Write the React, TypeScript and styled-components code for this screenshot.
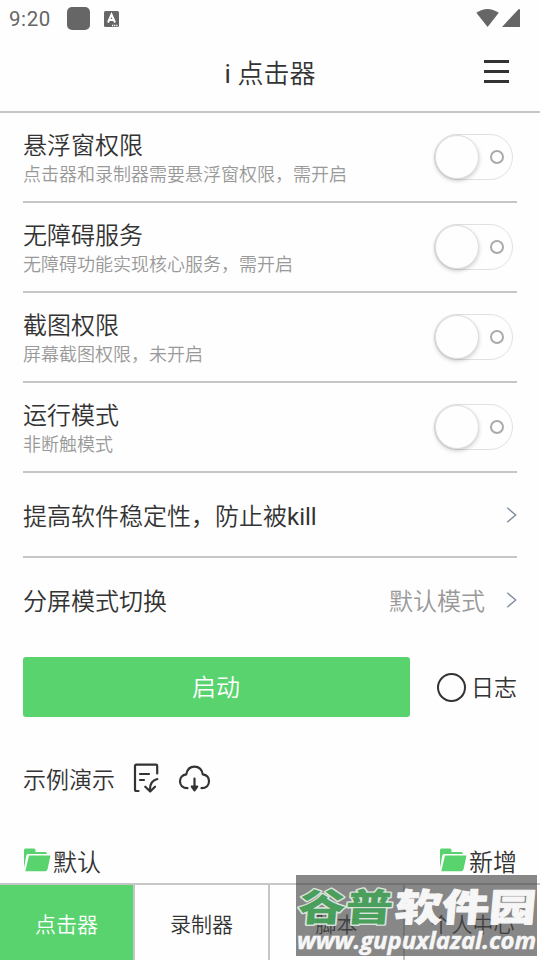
import React from "react";
import styled, { createGlobalStyle } from "styled-components";

const GREEN = "#58d36e";
const INK = "#333333";
const LINE = "#c6c6c6";

const GlobalStyle = createGlobalStyle`
  * { box-sizing: border-box; }
  body {
    margin: 0;
    background: #fefefe;
    color: ${INK};
    font-family: Roboto, "Noto Sans CJK SC DemiLight", "Noto Sans CJK SC", sans-serif;
    font-weight: 400;
  }
  svg { display: block; flex: none; }
`;

const Screen = styled.div`
  position: relative;
  width: 540px;
  height: 960px;
  display: flex;
  flex-direction: column;
  overflow: hidden;
`;

const StatusBar = styled.div`
  height: 37px;
  padding: 0 20px 0 9px;
  display: flex;
  align-items: center;
  color: #666;
`;

const Clock = styled.span`
  width: 58px;
  padding-top: 1px;
  font-size: 20.5px;
  font-weight: 400;
  letter-spacing: 0.6px;
  line-height: 37px;
`;

const AppBadge = styled.span`
  width: 23px;
  height: 23px;
  margin-right: 14px;
  border-radius: 5px;
  background: #666;
`;

const Signals = styled.div`
  margin: -1px 0 0 auto;
`;

const Header = styled.header`
  height: 76px;
  border-bottom: 2px solid ${LINE};
  display: grid;
  grid-template-columns: 1fr auto 1fr;
  align-items: center;
`;

const Title = styled.h1`
  grid-column: 2;
  margin: 0;
  font-size: 26px;
  font-weight: 400;
  line-height: 36px;
`;

const MenuButton = styled.div`
  justify-self: end;
  width: 25px;
  height: 23px;
  margin: 0 31px 6px 0;
  display: flex;
  flex-direction: column;
  justify-content: space-between;
`;

const MenuBar = styled.span`
  height: 3px;
  background: ${INK};
`;

const Settings = styled.main`
  padding: 0 23px;
`;

const Row = styled.div<{ $height: number; $last?: boolean }>`
  height: ${(p) => p.$height}px;
  border-bottom: 2px solid ${(p) => (p.$last ? "transparent" : LINE)};
  display: flex;
  align-items: center;
`;

const RowText = styled.div<{ $single?: boolean }>`
  flex: 1;
  padding-top: ${(p) => (p.$single ? 4 : 4)}px;
`;

const Label = styled.div`
  font-size: 24px;
  line-height: 32px;
`;

const Hint = styled.div`
  font-size: 18px;
  line-height: 26px;
  color: #999;
`;

const Value = styled.span`
  margin-right: 21px;
  padding-top: 4px;
  font-size: 24px;
  line-height: 32px;
  color: #999;
`;

const Switch = styled.div`
  width: 79px;
  height: 46px;
  margin-right: 4px;
  padding-right: 8px;
  border: 1.5px solid #e1e1e1;
  border-radius: 23px;
  display: flex;
  align-items: center;
  justify-content: space-between;
`;

const Knob = styled.span`
  width: 44px;
  height: 44px;
  border-radius: 50%;
  background: #fefefe;
  border: 1px solid #dedede;
  box-shadow: 0 2px 4px rgba(0, 0, 0, 0.2);
`;

const OffMark = styled.span`
  width: 14px;
  height: 14px;
  border-radius: 50%;
  border: 2px solid #aaa;
`;

const StartRow = styled.div`
  height: 60px;
  margin-top: 14px;
  display: flex;
  align-items: center;
`;

const StartButton = styled.div`
  width: 387px;
  height: 60px;
  padding: 1px 1px 0 0;
  border-radius: 3px;
  background: ${GREEN};
  color: #fff;
  font-size: 24px;
  line-height: 60px;
  text-align: center;
`;

const LogOption = styled.div`
  margin-left: auto;
  display: flex;
  align-items: center;
  gap: 5px;
  font-size: 23px;
`;

const LogLabel = styled.span`
  padding-top: 4px;
  line-height: 34px;
`;

const Radio = styled.span`
  width: 29px;
  height: 29px;
  border: 2.5px solid ${INK};
  border-radius: 50%;
`;

const DemoRow = styled.div`
  height: 40px;
  margin-top: 44px;
  display: flex;
  align-items: center;
  font-size: 23px;
  line-height: 40px;
`;

const DemoIcons = styled.div`
  margin: -6px 0 0 18px;
  display: flex;
  gap: 19px;
`;

const FolderRow = styled.div`
  height: 40px;
  margin-top: 42px;
  display: flex;
  justify-content: space-between;
`;

const Folder = styled.div`
  display: flex;
  align-items: center;
  gap: 2px;
  font-size: 24px;
  line-height: 40px;
  svg { margin-bottom: 7px; }
`;

const TabBar = styled.nav`
  height: 77px;
  margin-top: auto;
  border-top: 2px solid ${LINE};
  display: grid;
  grid-template-columns: 135px 135px 135px 135px;
`;

const Tab = styled.div<{ $active?: boolean }>`
  border-right: 2px solid ${LINE};
  background: ${(p) => (p.$active ? GREEN : "transparent")};
  color: ${(p) => (p.$active ? "#fff" : INK)};
  font-size: 21px;
  line-height: 80px;
  text-align: center;
  &:last-child { border-right: none; }
`;

const Watermark = styled.div`
  position: absolute;
  left: 296px;
  top: 875px;
  width: 241px;
  height: 81px;
  background: rgba(70, 70, 70, 0.65);
`;

const WatermarkArt = styled.svg`
  width: 241px;
  height: 81px;
  overflow: visible;
  opacity: 0.93;
  font-family: "Noto Sans CJK SC", sans-serif;
  font-weight: 900;
`;

const Chevron = () => (
  <svg width="11" height="16" viewBox="0 0 11 16" fill="none" stroke="#818e9f" strokeWidth="1.4">
    <path d="M1.2 .8 9.7 8 1.2 15.2" />
  </svg>
);

const FolderIcon = () => (
  <svg width="28" height="24" viewBox="0 0 28 24" fill={GREEN}>
    <path d="M1 20V2Q1 .5 2.5 .5H11Q12.5 .5 12.5 2V4H22Q24 4 24 6H5Q3.7 6 3.3 7.5Z" />
    <path d="M6 7.5H27.5L24.6 21Q24.1 23.3 22 23.3H2.3Z" />
  </svg>
);

const ScriptIcon = () => (
  <svg width="26" height="30" viewBox="0 0 26 30" fill="none" stroke={INK} strokeWidth="2.2" strokeLinecap="round" strokeLinejoin="round">
    <path d="M5.5 28H3.5Q2 28 2 26.5V3Q2 1.7 3.3 1.7H23Q24.2 1.7 24.2 3V10.5M7 11H16M7 17H11M24.3 16Q16.3 18 17 28M12.3 23.7 17.2 28.5 22 23.7" />
  </svg>
);

const CloudIcon = () => (
  <svg width="33" height="30" viewBox="0 0 33 30" fill="none" stroke={INK} strokeWidth="2.2" strokeLinecap="round" strokeLinejoin="round">
    <path d="M9.5 25.2C4.5 25.2 2 22 2 18.3C2 14.5 4.7 11.8 8.3 11.3C9.2 6.6 12.2 3.7 16.5 3.7C20.8 3.7 23.9 6.6 24.7 11.3C28.5 11.8 31 14.5 31 18.3C31 22 28.5 25.2 23.5 25.2M16.5 15.5V25" />
    <path d="M13.8 23.5H19.2L16.5 27.3Z" fill={INK} />
  </svg>
);

const TranslateBadge = () => (
  <svg width="15" height="16" viewBox="0 0 15 16">
    <rect width="15" height="16" rx="1.5" fill="#666" />
    <path d="M4 11.5 7.5 3.5 11 11.5M5.5 9H9.5" fill="none" stroke="#fff" strokeWidth="2" />
    <path d="M8 14.5H13.5" stroke="#fff" strokeWidth="1.3" strokeDasharray="1.3 .8" />
  </svg>
);

const PERMISSIONS = [
  { label: "悬浮窗权限", hint: "点击器和录制器需要悬浮窗权限，需开启" },
  { label: "无障碍服务", hint: "无障碍功能实现核心服务，需开启" },
  { label: "截图权限", hint: "屏幕截图权限，未开启" },
  { label: "运行模式", hint: "非断触模式" },
];

export default function App() {
  return (
    <Screen>
      <GlobalStyle />
      <StatusBar>
        <Clock>9:20</Clock>
        <AppBadge />
        <TranslateBadge />
        <Signals>
          <svg width="46" height="20" viewBox="0 0 46 20" fill="#666">
            <path d="M2.3 4.8Q13.5-2.8 24.8 4.8L13.6 19Z" />
            <path d="M28 19 44.5 1.2Q46 .5 46 2V19Z" />
          </svg>
        </Signals>
      </StatusBar>
      <Header>
        <Title>i 点击器</Title>
        <MenuButton>
          <MenuBar />
          <MenuBar />
          <MenuBar />
        </MenuButton>
      </Header>
      <Settings>
        {PERMISSIONS.map((item) => (
          <Row key={item.label} $height={90}>
            <RowText>
              <Label>{item.label}</Label>
              <Hint>{item.hint}</Hint>
            </RowText>
            <Switch>
              <Knob />
              <OffMark />
            </Switch>
          </Row>
        ))}
        <Row $height={85}>
          <RowText $single>
            <Label>提高软件稳定性，防止被kill</Label>
          </RowText>
          <Chevron />
        </Row>
        <Row $height={85} $last>
          <RowText $single>
            <Label>分屏模式切换</Label>
          </RowText>
          <Value>默认模式</Value>
          <Chevron />
        </Row>
        <StartRow>
          <StartButton>启动</StartButton>
          <LogOption>
            <Radio />
            <LogLabel>日志</LogLabel>
          </LogOption>
        </StartRow>
        <DemoRow>
          示例演示
          <DemoIcons>
            <ScriptIcon />
            <CloudIcon />
          </DemoIcons>
        </DemoRow>
        <FolderRow>
          <Folder>
            <FolderIcon />
            默认
          </Folder>
          <Folder>
            <FolderIcon />
            新增
          </Folder>
        </FolderRow>
      </Settings>
      <TabBar>
        <Tab $active>点击器</Tab>
        <Tab>录制器</Tab>
        <Tab>脚本</Tab>
        <Tab>个人中心</Tab>
      </TabBar>
      <Watermark>
        <WatermarkArt viewBox="0 0 241 81">
          <g transform="translate(1 46) skewX(-5) scale(1 .92)" fontSize="41" paintOrder="stroke" strokeLinejoin="round">
            <text textLength="95" lengthAdjust="spacingAndGlyphs" fill="#45a158" stroke="#e4ece4" strokeWidth="3">谷普</text>
            <text x="97" textLength="141" lengthAdjust="spacingAndGlyphs" fill="#fff" stroke="#fff" strokeWidth="1">软件园</text>
          </g>
          <text x="1" y="74" fontFamily="Open Sans" fontStyle="italic" fontWeight="700" fontSize="24" textLength="239" lengthAdjust="spacingAndGlyphs" fill="#fff" stroke="#fff" strokeWidth=".5">www.gupuxlazal.com</text>
        </WatermarkArt>
      </Watermark>
    </Screen>
  );
}
